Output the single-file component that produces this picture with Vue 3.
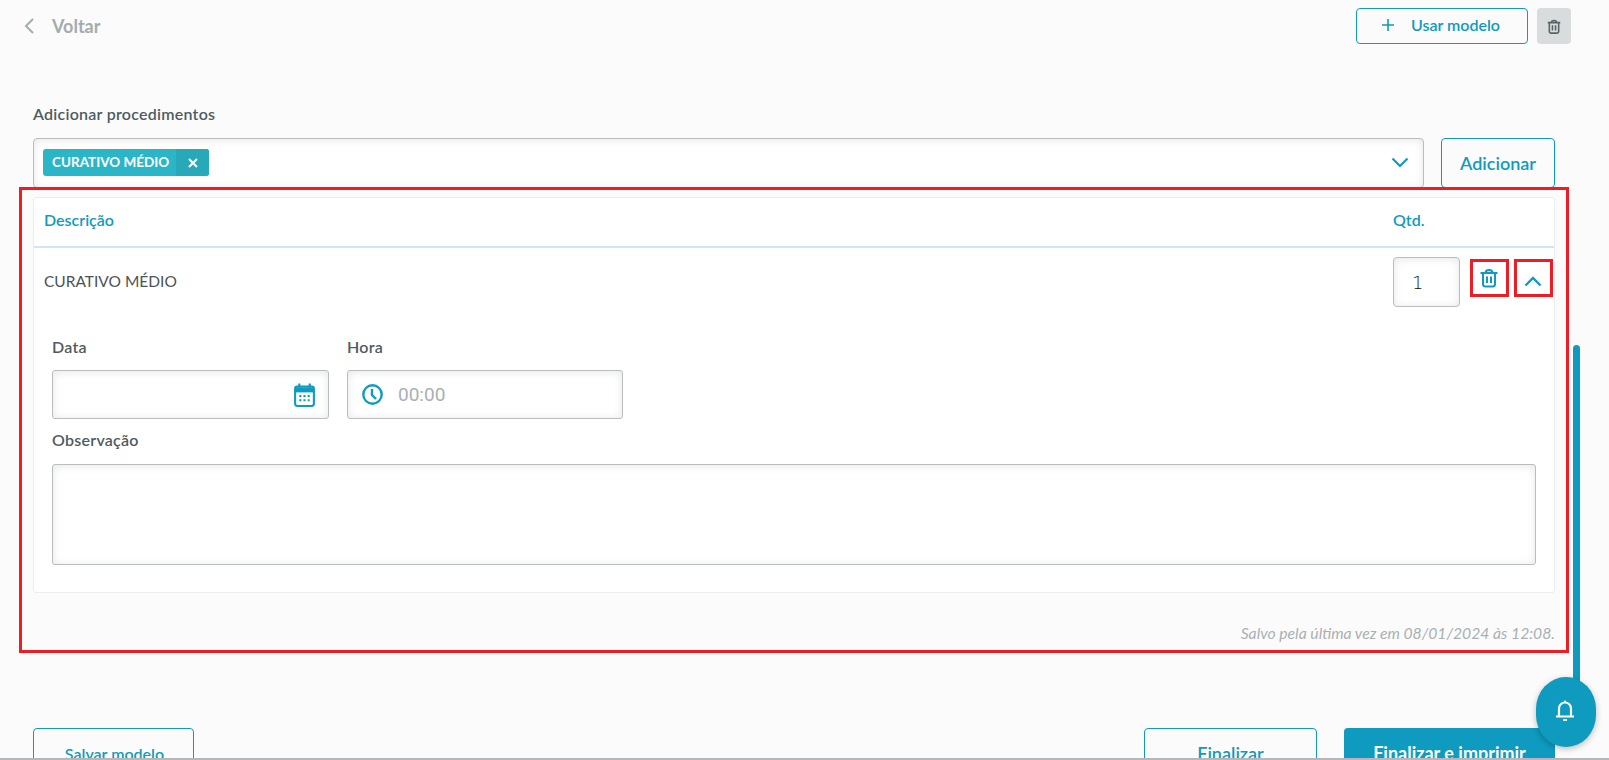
<script setup>
const fields = { date: 'Data', time: 'Hora', note: 'Observação' }
</script>

<template>
  <div class="page">
    <header class="topbar">
      <a class="back">
        <svg width="12" height="18" viewBox="0 0 12 18"><path d="M10 2 3 9l7 7" fill="none" stroke="#a4acae" stroke-width="2"/></svg>
        <span>Voltar</span>
      </a>
      <div class="top-actions">
        <button class="outline use">
          <svg width="14" height="14" viewBox="0 0 14 14"><path d="M7 1v12M1 7h12" stroke="#0e9bbf" stroke-width="1.6"/></svg>
          <span>Usar modelo</span>
        </button>
        <button class="trash-top">
          <svg width="14" height="15" viewBox="0 0 18 19" fill="none" stroke="#596366" stroke-width="2"><path d="M1 4.500h16M5.500 4.500C5.500 .8 12.500 .8 12.500 4.500M3 4.500V15.500a2.500 2.500 0 0 0 2.500 2.500h7a2.500 2.500 0 0 0 2.500-2.500V4.500M7 8v6.500M11 8v6.500"/></svg>
        </button>
      </div>
    </header>

    <label class="label add-label">Adicionar procedimentos</label>
    <div class="add-row">
      <div class="select">
        <span class="chip"><b>CURATIVO MÉDIO</b><i>
          <svg width="10" height="10" viewBox="0 0 10 10"><path d="M1 1l8 8M9 1l-8 8" stroke="#fff" stroke-width="2"/></svg>
        </i></span>
        <svg class="caret" width="18" height="11" viewBox="0 0 18 11"><path d="M1.500 1.500 9 9l7.500-7.500" fill="none" stroke="#0e9bbf" stroke-width="2.200"/></svg>
      </div>
      <button class="outline add">Adicionar</button>
    </div>

    <section class="card">
      <div class="thead"><span>Descrição</span><span class="qty-head">Qtd.</span></div>
      <div class="row">
        <span class="name">CURATIVO MÉDIO</span>
        <div class="qty">1</div>
        <button class="icon-btn trash-btn">
          <svg width="18" height="20" viewBox="0 0 18 19" fill="none" stroke="#0e9bbf" stroke-width="2"><path d="M.5 4.500h17M5.500 4.500C5.500 .6 12.500 .6 12.500 4.500M3 4.500V15.500a2.500 2.500 0 0 0 2.500 2.500h7a2.500 2.500 0 0 0 2.500-2.500V4.500M7 8v6.500M11 8v6.500"/></svg>
        </button>
        <button class="icon-btn up-btn">
          <svg width="18" height="11" viewBox="0 0 18 11"><path d="M1.500 9.500 9 2l7.500 7.500" fill="none" stroke="#0e9bbf" stroke-width="2.400"/></svg>
        </button>
      </div>
      <div class="details">
        <div class="two">
          <div class="field">
            <label class="label">{{ fields.date }}</label>
            <div class="input date">
              <svg width="21" height="24" viewBox="0 0 20 23"><rect x="1" y="3.500" width="18" height="18.500" rx="2" fill="none" stroke="#0e9bbf" stroke-width="2"/><path d="M1 4.500h18v4.500H1z" fill="#0e9bbf"/><path d="M5 .5v4M15 .5v4" stroke="#0e9bbf" stroke-width="2"/><path d="M5 12.500h2M9 12.500h2M13 12.500h2M5 16.500h2M9 16.500h2M13 16.500h2" stroke="#0e9bbf" stroke-width="1.800"/></svg>
            </div>
          </div>
          <div class="field">
            <label class="label">{{ fields.time }}</label>
            <div class="input time">
              <svg width="21" height="21" viewBox="0 0 21 21" fill="none" stroke="#0e9bbf" stroke-width="2.400"><circle cx="10.500" cy="10.500" r="9.200"/><path d="M10 5v6l4 4"/></svg>
              <span>00:00</span>
            </div>
          </div>
        </div>
        <label class="label obs-label">{{ fields.note }}</label>
        <div class="textarea"></div>
      </div>
    </section>

    <p class="saved">Salvo pela última vez em 08/01/2024 às 12:08.</p>

    <footer class="bottom">
      <button class="outline model">Salvar modelo</button>
      <div class="finish">
        <button class="outline end">Finalizar</button>
        <button class="solid">Finalizar e imprimir</button>
      </div>
    </footer>

    <div class="annot main-box"></div>
    <div class="annot trash-box"></div>
    <div class="annot up-box"></div>
    <div class="scroll"></div>
    <button class="bell">
      <svg width="20" height="23" viewBox="0 0 20 23" fill="none" stroke="#fff" stroke-width="2.200"><path d="M4 17V9.500a6 6 0 0 1 12 0V17M1 17.500h18"/><path d="M8 21h4" stroke-width="1.800"/><path d="M10 1.500v2" stroke-width="1.500"/></svg>
    </button>
    <div class="baseline"></div>
  </div>
</template>

<style>
html, body { margin: 0; overflow: hidden; }
</style>

<style scoped>
.page {
  position: relative;
  box-sizing: border-box;
  width: 1609px;
  height: 760px;
  overflow: hidden;
  padding: 0 54px 0 33px;
  background: #fbfbfc;
  font-family: "Lato", "Open Sans", sans-serif;
  color: #4f5b60;
}
button { font-family: inherit; padding: 0; cursor: pointer; }
.topbar { display: flex; justify-content: space-between; padding-top: 8px; height: 36px; }
.back { display: flex; align-items: center; gap: 17px; margin-left: -10px; color: #a4acae; font-size: 18px; font-weight: 700; height: 36px; }
.top-actions { display: flex; gap: 9px; margin-right: -16px; }
.outline { background: transparent; border: 1px solid #0e9bbf; border-radius: 4px; color: #0e9bbf; font-weight: 600; }
.use { width: 172px; height: 36px; display: flex; align-items: center; gap: 16px; padding: 0 0 3px 24px; font-size: 16px; }
.trash-top { width: 34px; height: 36px; border: 0; border-radius: 4px; background: #d8dcdd; display: flex; align-items: center; justify-content: center; }
.label { display: block; font-size: 16px; font-weight: 600; letter-spacing: .25px; color: #4f5b60; line-height: 20px; }
.add-label { margin-top: 60px; }
.add-row { display: flex; justify-content: space-between; margin-top: 14px; height: 49px; }
.select {
  box-sizing: border-box; width: 1391px; height: 50px; border: 1px solid #b8bdbe; border-radius: 4px;
  background: #fff; box-shadow: inset 0 1px 8px rgba(0,0,0,.1); display: flex; align-items: flex-start; justify-content: space-between;
  padding: 10px 14px 0 9px;
}
.chip { display: flex; height: 27px; border-radius: 3px; background: #2bb6c8; color: #fff; font-size: 13.500px; overflow: hidden; line-height: 27px; }
.chip b { padding: 0 7px 0 9px; font-weight: 700; }
.chip i { width: 33px; background: #27a9ba; display: flex; align-items: center; justify-content: center; }
.caret { margin-top: 8px; }
.add { width: 114px; height: 50px; font-size: 18px; }
.card { box-sizing: border-box; margin-top: 10px; height: 396px; background: #fff; border: 1px solid #ebeced; border-radius: 3px; }
.thead { display: flex; align-items: center; height: 42px; padding: 0 0 6px 10px; border-bottom: 2px solid #cfe8f0; color: #0e9bbf; font-size: 16px; font-weight: 600; }
.qty-head { margin-left: auto; width: 161px; }
.row { display: flex; align-items: center; height: 66px; padding-left: 10px; }
.name { font-size: 15.500px; color: #4b5356; margin-right: auto; }
.qty { box-sizing: border-box; width: 67px; height: 50px; margin-top: 2px; border: 1px solid #b8bdbe; border-radius: 4px; font-family: "DejaVu Sans", sans-serif; font-weight: 200; font-size: 18px; color: #111; display: flex; align-items: center; padding-left: 18px; box-shadow: inset 0 1px 8px rgba(0,0,0,.1); }
.icon-btn { width: 39px; height: 37px; border: 0; background: transparent; display: flex; align-items: center; justify-content: center; }
.trash-btn { margin-left: 10px; padding: 0 2px 6px 0; }
.up-btn { margin-left: 5px; margin-right: 1px; padding-right: 2px; }
.details { padding: 23px 18px 0 18px; }
.two { display: grid; grid-template-columns: 277px 276px; gap: 18px; }
.field .label { margin-bottom: 13px; }
.input, .textarea { box-sizing: border-box; background: #fff; border: 1px solid #b8bdbe; border-radius: 3px; box-shadow: inset 0 1px 8px rgba(0,0,0,.1); }
.input { height: 49px; display: flex; align-items: center; }
.date { justify-content: flex-end; padding-right: 13px; }
.time { padding-left: 14px; gap: 15px; font-family: "Roboto", sans-serif; font-size: 19px; color: #a9b0b2; }
.time span { margin-top: -1px; }
.obs-label { margin-top: 11px; margin-bottom: 14px; }
.textarea { height: 101px; }
.saved { margin: 30px 0 0; text-align: right; font-style: italic; font-size: 15.700px; line-height: 20px; color: #a9b0b2; }
.bottom { display: flex; justify-content: space-between; margin-top: 85px; }
.bottom button { height: 50px; }
.model { width: 161px; font-size: 16px; padding-left: 2px; }
.finish { display: flex; gap: 27px; }
.end { width: 173px; font-size: 18px; }
.solid { width: 211px; border: 0; border-radius: 4px; background: #0e9bbf; color: #fff; font-weight: 700; font-size: 18px; }
.annot { position: absolute; box-sizing: border-box; border: 3px solid #ee1c25; }
.main-box { left: 19px; top: 187px; width: 1550px; height: 466px; }
.trash-box { left: 1470px; top: 259px; width: 39px; height: 38px; }
.up-box { left: 1514px; top: 259px; width: 39px; height: 38px; }
.scroll { position: absolute; left: 1573px; top: 345px; width: 7px; height: 340px; border-radius: 4px 4px 0 0; background: #0e9bbf; }
.bell { position: absolute; left: 1536px; top: 677px; width: 60px; height: 70px; padding: 0 2px 4px 0; border: 0; border-radius: 30px / 32px; background: #0e9bbf; box-shadow: 0 2px 6px rgba(0,0,0,.25); display: flex; align-items: center; justify-content: center; }
.baseline { position: absolute; left: 0; right: 0; bottom: 0; height: 2px; background: #b5b7b9; }
</style>
